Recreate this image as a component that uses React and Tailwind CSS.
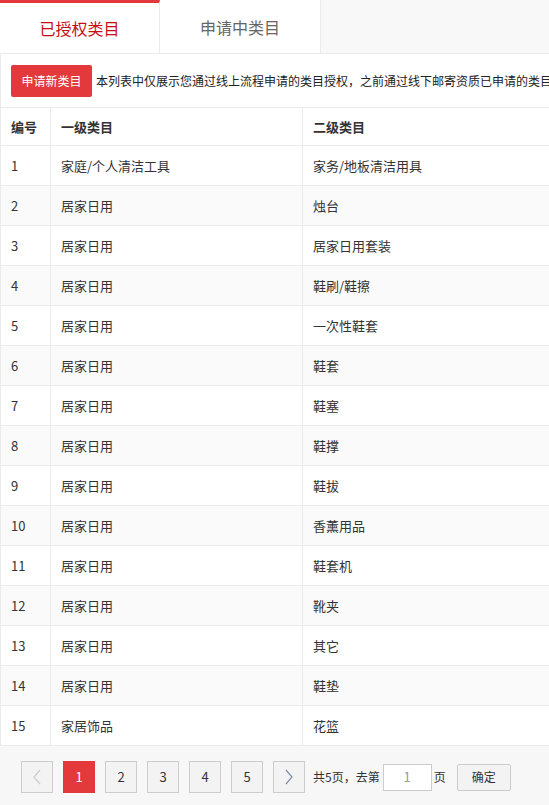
import React from 'react'

const rows = [
  ['1', '家庭/个人清洁工具', '家务/地板清洁用具'],
  ['2', '居家日用', '烛台'],
  ['3', '居家日用', '居家日用套装'],
  ['4', '居家日用', '鞋刷/鞋擦'],
  ['5', '居家日用', '一次性鞋套'],
  ['6', '居家日用', '鞋套'],
  ['7', '居家日用', '鞋塞'],
  ['8', '居家日用', '鞋撑'],
  ['9', '居家日用', '鞋拔'],
  ['10', '居家日用', '香薰用品'],
  ['11', '居家日用', '鞋套机'],
  ['12', '居家日用', '靴夹'],
  ['13', '居家日用', '其它'],
  ['14', '居家日用', '鞋垫'],
  ['15', '家居饰品', '花篮'],
]

function Chevron({ dir, color }) {
  return (
    <svg width="10" height="16" viewBox="0 0 10 16" fill="none">
      <path
        d={dir === 'left' ? 'M8 1 L2 8 L8 15' : 'M2 1 L8 8 L2 15'}
        stroke={color}
        strokeWidth="1.2"
      />
    </svg>
  )
}

function PageBtn({ children, active }) {
  return (
    <div
      className={`w-[32px] h-[32px] flex items-center justify-center border text-[13px] ${
        active ? 'bg-[#e4393c] border-[#e4393c] text-white' : 'bg-[#f3f3f3] border-[#cccccc] text-[#333]'
      }`}
    >
      {children}
    </div>
  )
}

export default function App() {
  return (
    <div
      className="w-[549px] h-[805px] overflow-hidden bg-white text-[#333]"
      style={{ fontFamily: '"Noto Sans CJK SC", "Liberation Sans", sans-serif' }}
    >
      <div className="w-[900px]">
        {/* Tabs */}
        <div className="flex h-[54px] bg-[#f8f8f8] border-b border-[#ebebeb]">
          <div className="w-[160px] bg-white border-t-[3px] border-[#e4393c] border-r border-r-[#ebebeb] flex items-center justify-center text-[16px] text-[#c40d14]">
            已授权类目
          </div>
          <div className="w-[161px] bg-white border-r border-[#ebebeb] flex items-center justify-center text-[16px] text-[#666]">
            申请中类目
          </div>
        </div>

        <div className="border-l border-[#ebebeb]">
          {/* Toolbar */}
          <div className="flex items-center pt-[11px] pb-[10px] pl-[10px]">
            <div className="w-[81px] h-[32px] bg-[#e4393c] rounded-[2px] text-white text-[12px] flex items-center justify-center">
              申请新类目
            </div>
            <span className="ml-[4px] text-[12px] text-[#222] whitespace-nowrap">
              本列表中仅展示您通过线上流程申请的类目授权，之前通过线下邮寄资质已申请的类目授权请联系客服查询
            </span>
          </div>

          {/* Table */}
          <div className="border-t border-[#ebebeb] text-[13px]">
            <div className="flex h-[38px] border-b border-[#ebebeb] font-bold items-center">
              <div className="w-[50px] h-full border-r border-[#ebebeb] pl-[10px] flex items-center">编号</div>
              <div className="w-[252px] h-full border-r border-[#ebebeb] pl-[10px] flex items-center">一级类目</div>
              <div className="flex-1 h-full pl-[10px] flex items-center">二级类目</div>
            </div>
            {rows.map((r, i) => (
              <div
                key={r[0]}
                className={`flex h-[40px] border-b border-[#ebebeb] ${i % 2 === 1 ? 'bg-[#fafafa]' : 'bg-white'}`}
              >
                <div className="w-[50px] h-full border-r border-[#ebebeb] pl-[10px] flex items-center">{r[0]}</div>
                <div className="w-[252px] h-full border-r border-[#ebebeb] pl-[10px] flex items-center">{r[1]}</div>
                <div className="flex-1 h-full pl-[10px] flex items-center">{r[2]}</div>
              </div>
            ))}
          </div>
        </div>

        {/* Pagination */}
        <div className="h-[60px] bg-[#f7f7f7] flex items-start pt-[15px] pl-[21px] text-[12px] text-[#333]">
          <div className="flex gap-[10px]">
            <PageBtn>
              <Chevron dir="left" color="#cccccc" />
            </PageBtn>
            <PageBtn active>1</PageBtn>
            <PageBtn>2</PageBtn>
            <PageBtn>3</PageBtn>
            <PageBtn>4</PageBtn>
            <PageBtn>5</PageBtn>
            <PageBtn>
              <Chevron dir="right" color="#7d8fa8" />
            </PageBtn>
          </div>
          <div className="flex items-center h-[32px] ml-[8px]">
            <span>共5页，去第</span>
            <div className="ml-[3px] w-[49px] h-[27px] bg-white border border-[#cccccc] flex items-center justify-center text-[#999] text-[13px]">
              1
            </div>
            <span className="ml-[2px]">页</span>
            <div className="ml-[11px] w-[54px] h-[27px] bg-[#f3f3f3] border border-[#cccccc] rounded-[2px] flex items-center justify-center text-[12px]">
              确定
            </div>
          </div>
        </div>
      </div>
    </div>
  )
}
